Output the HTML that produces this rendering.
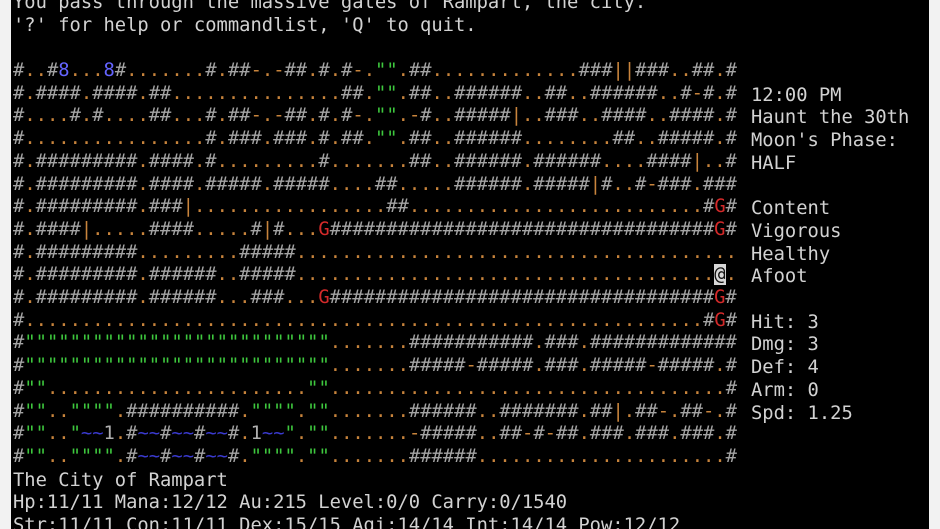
<!DOCTYPE html>
<html><head><meta charset="utf-8">
<style>
html,body{margin:0;padding:0;background:#f2f2f2;width:940px;height:529px;overflow:hidden;}
#term{position:absolute;left:11px;top:0;width:918px;height:529px;background:#000;overflow:hidden;}
pre{position:absolute;margin:0;font-family:"DejaVu Sans Mono","Liberation Mono",monospace;font-size:18.8px;line-height:22.7px;color:#d2d2d2;white-space:pre;}
#msg{left:2px;top:-8px;}
#map{left:2px;top:60px;color:#a4a4a4;}
#panel{left:740px;top:84.7px;}
#bot{left:2px;top:469.5px;}
.d{color:#c8843c}.q{color:#3ec83e}.b{color:#6464ff}.t{color:#3a3ad0}.r{color:#d42a2a}.w{color:#b0b0b0}
.at{background:#d8d8d8;color:#111}
</style></head><body>
<div id="term">
<pre id="msg">You pass through the massive gates of Rampart, the city.
'?' for help or commandlist, 'Q' to quit.</pre>
<pre id="map">#..#8...8#.......#.##-.-##.#.#-."".##.............###||###..##.#
#.####.####.##...............##."".##..######..##..######..#-#.#
#....#.#....##...#.##-.-##.#.#-."".-#..#####|..###..####..####.#
#................#.###.###.#.##."".##..######........##..#####.#
#.#########.####.#.........#.......##..######.######....####|..#
#.#########.####.#####.#####....##.....######.#####|#..#-###.###
#.#########.###|.................##..........................#G#
#.####|.....####.....#|#...G##################################G#
#.#########.........#####.......................................
#.#########.######..#####.....................................@.
#.#########.######...###...G##################################G#
#............................................................#G#
#"""""""""""""""""""""""""""".......###########.###.#############
#""""""""""""""""""""""""""""".......#####-#####.###.#####-#####.#
#"".......................""...................................#
#"".."""".##########."""".""".......######..#######.##|.##-.##-.#
#"".."~~1.#~~#~~#~~#.1~~".""".......-#####..##-#-##.###.###.###.#
#"".."""".#~~#~~#~~#."""".""".......######......................#</pre>
<pre id="panel">12:00 PM
Haunt the 30th
Moon's Phase:
HALF

Content
Vigorous
Healthy
Afoot

Hit: 3
Dmg: 3
Def: 4
Arm: 0
Spd: 1.25</pre>
<pre id="bot">The City of Rampart
Hp:11/11 Mana:12/12 Au:215 Level:0/0 Carry:0/1540
Str:11/11 Con:11/11 Dex:15/15 Agi:14/14 Int:14/14 Pow:12/12</pre>
</div>
<script>
(function(){
var m=document.getElementById('map');
var lines=m.textContent.split('\n');
var out=[];
for(var i=0;i<lines.length;i++){
 var L=lines[i];
 if(i===12||i===13){
  var tail=(i===12)?'###########.###.#############':'#####-#####.###.#####-#####.#';
  L='#'+Array(28).join('"')+'.......'+tail;
 }
 if(i===14){L='#""'+Array(24).join('.')+'""'+Array(36).join('.')+'#';}
 if(i===15){L='#"".."""".##########."""".""'+'.......'+'######..#######.##|.##-.##-.#';}
 if(i===16){L='#"".."~~1.#~~#~~#~~#.1~~".""'+'.......'+'-#####..##-#-##.###.###.###.#';}
 if(i===17){L='#"".."""".#~~#~~#~~#."""".""'+'.......'+'######'+Array(23).join('.')+'#';}
 var h='';
 for(var j=0;j<L.length;j++){
  var c=L[j],cl='';
  if(c==='.'||c==='-'||c==='|')cl='d';
  else if(c==='"')cl='q';
  else if(c==='8')cl='b';
  else if(c==='~')cl='t';
  else if(c==='G')cl='r';
  else if(c==='1')cl='w';
  else if(c==='@')cl='at';
  h+=cl?'<span class="'+cl+'">'+(c==='"'?'&quot;':c)+'</span>':c;
 }
 out.push(h);
}
m.innerHTML=out.join('\n');
})();
</script>
</body></html>
